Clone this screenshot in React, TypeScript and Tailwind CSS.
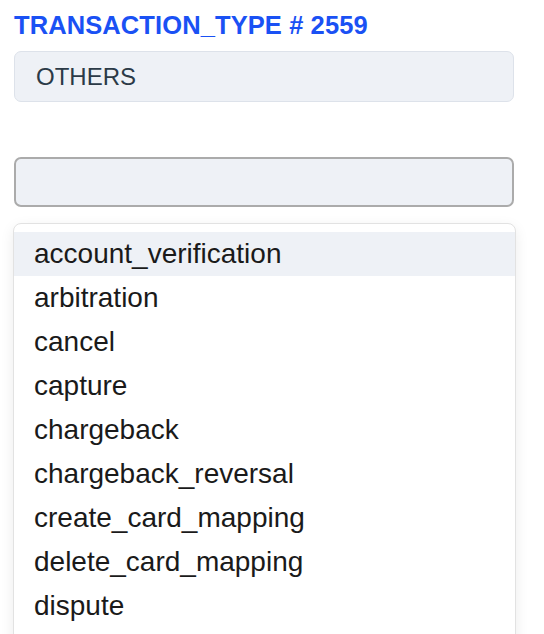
import React from 'react';

const options = [
  'account_verification',
  'arbitration',
  'cancel',
  'capture',
  'chargeback',
  'chargeback_reversal',
  'create_card_mapping',
  'delete_card_mapping',
  'dispute',
];

const App: React.FC = () => {
  return (
    <div className="h-[634px] overflow-hidden bg-white px-[14px] pt-[12px] font-['Liberation_Sans',Arial,sans-serif]">
      <h2 className="text-[25.5px] leading-[26px] font-bold tracking-[0.1px] text-[#1a51f4]">
        TRANSACTION_TYPE # 2559
      </h2>
      <div className="mt-[13px] flex h-[51px] w-[500px] items-center rounded-[7px] border-[1.5px] border-[#dde2ea] bg-[#eef1f6] pl-[21px] text-[24px] text-[#2b3a47]">
        OTHERS
      </div>

      <div className="mt-[55px] h-[50px] w-[500px] rounded-[7px] border-2 border-[#ababab] bg-[#eef1f6]" />

      <div className="-ml-px mt-[16px] w-[503px] rounded-t-[8px] border border-[#e2e2e2] bg-white pt-[8px] pb-[20px] shadow-[0_4px_14px_rgba(0,0,0,0.08)]">
        {options.map((opt, i) => (
          <div
            key={opt}
            className={`flex h-[44px] items-center pl-[20px] text-[28px] text-[#1a1a1a] ${
              i === 0 ? 'bg-[#eef1f6]' : ''
            }`}
          >
            {opt}
          </div>
        ))}
      </div>
    </div>
  );
};

export default App;
